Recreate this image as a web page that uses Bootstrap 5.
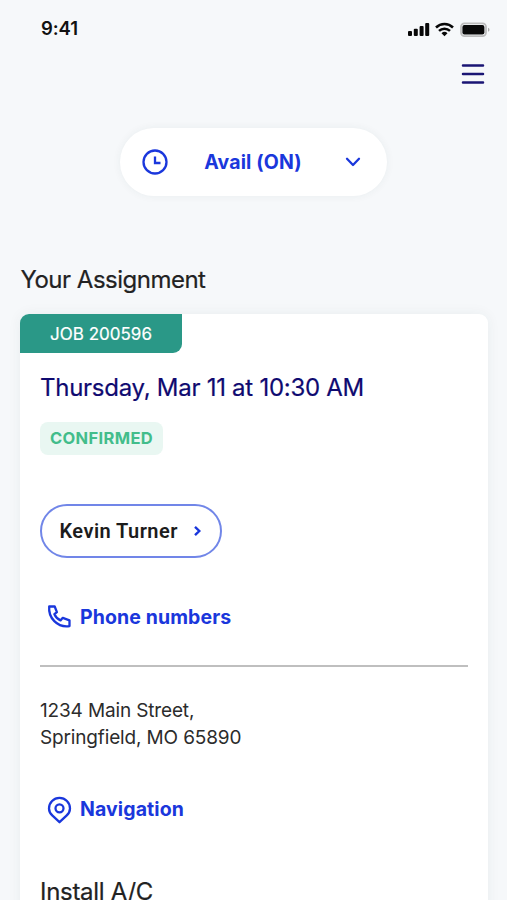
<!DOCTYPE html>
<html lang="en">
<head>
<meta charset="utf-8">
<meta name="viewport" content="width=device-width, initial-scale=1">
<title>Your Assignment</title>
<link href="https://cdn.jsdelivr.net/npm/bootstrap@5.3.0/dist/css/bootstrap.min.css" rel="stylesheet">
<style>
  body { font-family: Inter, "Liberation Sans", sans-serif; background: #f6f8fa; color: #222; }
  .screen { height: 900px; overflow: hidden; }
  .status-bar { height: 56px; padding: 1px 17px 0 41px; color: #111; }
  .clock { font-size: 18.5px; font-weight: 600; letter-spacing: -.1px; padding-top: 1px; }
  .top-nav { height: 36px; padding-right: 22px; }
  .avail { width: 267px; height: 68px; margin: 36px 0 0 120px; padding: 0 25px 0 22px; background: #fff; border: 0; color: #1a37dc; box-shadow: 0 0 8px rgba(40,60,60,.06); }
  .avail-label { font-size: 19.5px; font-weight: 700; letter-spacing: .15px; padding: 2px 6px 0 0; }
  .section-title { font-size: 24px; line-height: 32px; font-weight: 400; margin: 68px 0 18px 20.500px; letter-spacing: -.5px; -webkit-text-stroke: .2px; }
  .job { margin: 0 19px 0 20px; height: 620px; border-radius: 9px; background: #fff; box-shadow: 0 0 14px rgba(40,70,70,.06); }
  .job-tag { width: 162px; height: 38.5px; padding-top: 2px; background: #2a9887; color: #fff; border-radius: 9px 0 9px 0; font-size: 17px; -webkit-text-stroke: .2px; }
  .job-body { padding: 0 20px; }
  .job-date { font-size: 24px; line-height: 32px; font-weight: 400; color: #0f0a70; margin: 19px 0 18px; letter-spacing: -.27px; -webkit-text-stroke: .2px; }
  .state { width: 123px; height: 33px; border-radius: 8px; background: #e9f7f2; color: #42bd8b; font-size: 16.5px; font-weight: 650; letter-spacing: .35px; }
  .person { width: 182px; height: 54px; margin-top: 49px; padding: 0 18px 0 17.500px; background: #fff; border: 2px solid #7186e8; color: #1c1c1c; font-family: Roboto, sans-serif; font-size: 20px; font-weight: 600; letter-spacing: .45px; }
  .action { height: 32px; padding-left: 7px; gap: 8px; color: #1a37dc; font-size: 19.5px; font-weight: 700; text-decoration: none; }
  .action span { letter-spacing: .1px; padding-top: 2px; }
  .phone { margin-top: 43px; }
  .rule { height: 2px; background: #bfbfbf; margin: 32px 0 30px; }
  .address { font-size: 19px; line-height: 27px; color: #2c2c2c; letter-spacing: -.15px; }
  .nav-link-row { margin-top: 43px; }
  .nav-link-row span { padding-top: 0; }
  .task { font-size: 24px; line-height: 32px; font-weight: 400; margin: 50px 0 0; letter-spacing: -.3px; -webkit-text-stroke: .2px; }
  svg { display: block; flex: none; }
</style>
</head>
<body>
<main class="screen">
  <header class="status-bar d-flex justify-content-between align-items-center">
    <span class="clock">9:41</span>
    <svg width="82" height="16" viewBox="0 0 82 16">
      <g fill="#080808">
        <rect x="0" y="10" width="4" height="5" rx="1"/><rect x="5.800" y="7.800" width="4" height="7.200" rx="1"/>
        <rect x="11.600" y="5" width="4" height="10" rx="1"/><rect x="17.200" y="2" width="4" height="13" rx="1"/>
        <path d="M36.500 15.200l-3-3a4.400 4.400 0 0 1 6 0z"/>
        <rect x="54.400" y="4" width="22" height="9.400" rx="2"/>
      </g>
      <path d="M28 6.500a12.200 12.200 0 0 1 17 0M31 9.900a8 8 0 0 1 11 0" fill="none" stroke="#080808" stroke-width="2.500"/>
      <rect x="53" y="2.300" width="25" height="12.800" rx="3.500" fill="none" stroke="#bcbcbc" stroke-width="1.800"/>
      <path d="M80 6.800v4q1.500-.6 1.500-2t-1.500-2" fill="#aaa"/>
    </svg>
  </header>
  <nav class="top-nav d-flex justify-content-end align-items-center">
    <svg width="24" height="22" viewBox="0 0 24 22" fill="none" stroke="#1a1574" stroke-width="2.500" stroke-linecap="round"><path d="M2 2.500h20M2 11h20M2 19.500h20"/></svg>
  </nav>

  <button class="avail d-flex align-items-center justify-content-between rounded-pill">
    <svg width="26" height="26" viewBox="0 0 26 26" fill="none" stroke="currentColor" stroke-width="2.300"><circle cx="13" cy="13" r="11.500"/><path d="M13 7.500V14h5.500"/></svg>
    <span class="avail-label">Avail (ON)</span>
    <svg width="18" height="12" viewBox="0 0 18 12" fill="none" stroke="currentColor" stroke-width="2.300" stroke-linecap="round" stroke-linejoin="round"><path d="M3 2.800L9 9l6-6.200"/></svg>
  </button>

  <h1 class="section-title">Your Assignment</h1>
  <article class="job">
    <div class="job-tag d-flex align-items-center justify-content-center">JOB 200596</div>
    <div class="job-body">
      <h2 class="job-date">Thursday, Mar 11 at 10:30 AM</h2>
      <div class="state d-flex align-items-center justify-content-center">CONFIRMED</div>
      <button class="person d-flex align-items-center justify-content-between rounded-pill">
        <span>Kevin Turner</span>
        <svg width="9" height="12" viewBox="0 0 9 12" fill="none" stroke="#1a37dc" stroke-width="2.400"><path d="M2 1.800l4.300 4.200L2 10.200"/></svg>
      </button>
      <a class="action phone d-flex align-items-center" href="#">
        <svg width="25" height="26" viewBox="0 0 25 26" fill="none" stroke="currentColor" stroke-width="2.300" stroke-linejoin="round"><path d="M2.200 2.500h5.500l2.200 5.600-2.500 2.100c1.200 2.700 3.400 4.900 6.100 6.200l2.300-2.600 6.700 2.500v5.800c-5.700.9-11.300-1.100-15.200-5S1.700 8.200 2.200 2.500z"/></svg>
        <span>Phone numbers</span>
      </a>
      <div class="rule"></div>
      <address class="address mb-0">1234 Main Street,<br>Springfield, MO 65890</address>
      <a class="action nav-link-row d-flex align-items-center" href="#">
        <svg width="25" height="28" viewBox="0 0 25 28" fill="none" stroke="currentColor" stroke-width="2.300" stroke-linejoin="round"><path d="M12.500 26.200l-7-6.500C3.300 17.600 2 15.300 2 12.400a10.500 10.500 0 0 1 21 0c0 2.900-1.300 5.200-3.500 7.300z"/><circle cx="12.500" cy="12.300" r="4"/></svg>
        <span>Navigation</span>
      </a>
      <h3 class="task">Install A/C</h3>
    </div>
  </article>
</main>
<script src="https://cdn.jsdelivr.net/npm/bootstrap@5.3.0/dist/js/bootstrap.bundle.min.js"></script>
</body>
</html>
